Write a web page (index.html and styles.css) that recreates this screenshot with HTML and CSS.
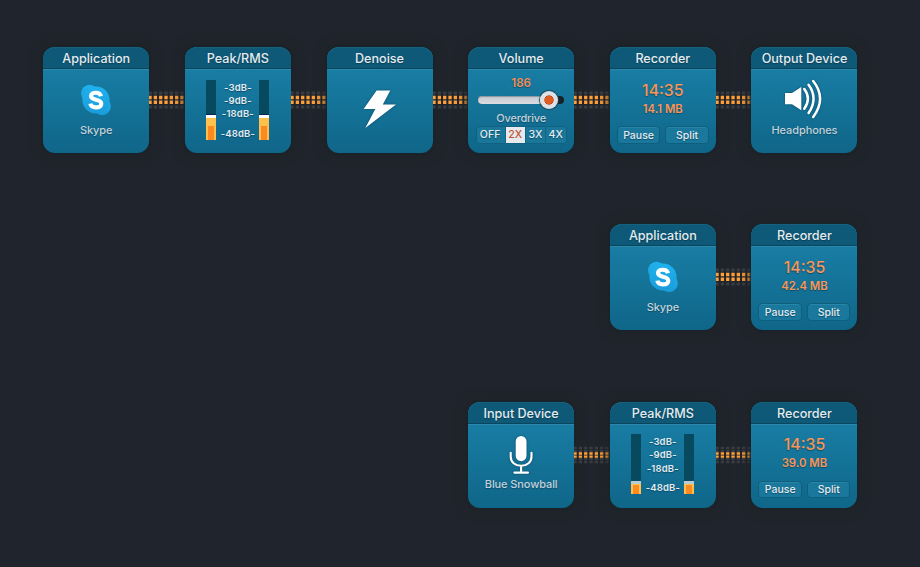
FILE: index.html
```html
<!DOCTYPE html>
<html lang="en">
<head>
<meta charset="utf-8">
<title>Audio session</title>
<link rel="stylesheet" href="styles.css">
</head>
<body>
<svg class="defs" aria-hidden="true">
  <defs>
    <linearGradient id="sky" x1="0" y1="0" x2="0" y2="1"><stop offset="0" stop-color="#1fb2ee"/><stop offset="1" stop-color="#1b9cdb"/></linearGradient>
    <symbol id="skype" viewBox="0 0 32 32">
      <g fill="url(#sky)"><circle cx="9.6" cy="9.3" r="8.6"/><circle cx="22.2" cy="22.4" r="8.6"/><circle cx="16" cy="16" r="13.6"/></g>
      <path d="M21 12.3C20.4 9.6 18.4 8.7 15.9 8.7C13.2 8.7 11 9.9 11 12.1C11 14.4 13 15.1 15.9 15.7C18.9 16.3 21.3 17.1 21.3 19.7C21.3 22.2 18.9 23.4 15.8 23.4C13 23.4 10.8 22.2 10.3 19.6" fill="none" stroke="#fff" stroke-width="4.1"/>
    </symbol>
    <symbol id="wire" viewBox="0 0 36 18">
      <g class="idle"><path d="M0 2h36M0 16h36"/></g>
      <g class="live"><path d="M0 6.5h36M0 11.2h36"/></g>
    </symbol>
    <symbol id="wire-low" viewBox="0 0 36 18">
      <g class="idle low"><path d="M0 1.8h36M0 4.8h36M0 13.2h36M0 16.2h36"/></g>
      <g class="live low"><path d="M0 7.5h36M0 10.6h36"/></g>
    </symbol>
  </defs>
</svg>
<main class="canvas">
  <section class="node c1 r1"><h2>Application</h2><div class="body"><svg class="skype"><use href="#skype"/></svg><p class="name">Skype</p></div><svg class="wire"><use href="#wire"/></svg></section>
  <section class="node c2 r1"><h2>Peak/RMS</h2><div class="body meters"><i class="meter high"></i><div class="scale"><span>-3dB-</span><span>-9dB-</span><span>-18dB-</span><span>-48dB-</span></div><i class="meter high"></i></div><svg class="wire"><use href="#wire"/></svg></section>
  <section class="node c3 r1"><h2>Denoise</h2><div class="body"><svg class="bolt" viewBox="0 0 34 40"><path d="M13.6 1.6H27.3L19.8 15.6H33L2.3 39L12.3 20.1H.6Z"/></svg></div><svg class="wire"><use href="#wire"/></svg></section>
  <section class="node c4 r1"><h2>Volume</h2><div class="body volume"><p class="level">186</p><div class="slider"><i class="fill"></i><i class="knob"></i></div><p class="name">Overdrive</p><div class="segments"><span>OFF</span><span class="on">2X</span><span>3X</span><span>4X</span></div></div><svg class="wire"><use href="#wire"/></svg></section>
  <section class="node c5 r1"><h2>Recorder</h2><div class="body recorder"><p class="time">14:35</p><p class="size">14.1 MB</p><div class="actions"><button>Pause</button><button>Split</button></div></div><svg class="wire"><use href="#wire"/></svg></section>
  <section class="node c6 r1"><h2>Output Device</h2><div class="body"><svg class="speaker" viewBox="0 0 40 40"><path class="solid" d="M1 14H8L17.3 8V31.2L8 25.3H1Z"/><path class="waves" d="M20.3 10Q27.5 19.5 20.3 29.8M24.6 5.8Q34.5 19.5 24.6 34M29.2 2Q43 19.5 29.2 38"/></svg><p class="name">Headphones</p></div></section>

  <section class="node c5 r2"><h2>Application</h2><div class="body"><svg class="skype"><use href="#skype"/></svg><p class="name">Skype</p></div><svg class="wire"><use href="#wire"/></svg></section>
  <section class="node c6 r2"><h2>Recorder</h2><div class="body recorder"><p class="time">14:35</p><p class="size">42.4 MB</p><div class="actions"><button>Pause</button><button>Split</button></div></div></section>

  <section class="node c4 r3"><h2>Input Device</h2><div class="body"><svg class="mic" viewBox="0 0 24 40"><rect class="solid" x="6.7" y="1" width="10.8" height="25.2" rx="5.4"/><path class="waves" d="M1.7 17.7V21.5C1.7 27 6 30.8 12.1 30.8S22.5 27 22.5 21.5V17.7M12.1 30.8V37.6M5.4 37.6H19"/></svg><p class="name">Blue Snowball</p></div><svg class="wire"><use href="#wire-low"/></svg></section>
  <section class="node c5 r3"><h2>Peak/RMS</h2><div class="body meters"><i class="meter quiet"></i><div class="scale"><span>-3dB-</span><span>-9dB-</span><span>-18dB-</span><span>-48dB-</span></div><i class="meter quiet"></i></div><svg class="wire"><use href="#wire-low"/></svg></section>
  <section class="node c6 r3"><h2>Recorder</h2><div class="body recorder"><p class="time">14:35</p><p class="size">39.0 MB</p><div class="actions"><button>Pause</button><button>Split</button></div></div></section>
</main>
</body>
</html>
```
FILE: styles.css
```css
*, *::before, *::after { box-sizing: border-box; }
body { margin: 0; background: #20242c; font-family: Inter, "Liberation Sans", sans-serif; color: #e4ebf0; }
h2, p { margin: 0; font-weight: 500; }
.defs { position: absolute; width: 0; height: 0; }
.canvas { width: 920px; height: 567px; padding: 47.4px 0 0 43.2px; display: grid; grid-template-columns: repeat(6, 106px); grid-template-rows: repeat(3, 106px); column-gap: 35.66px; row-gap: 71.1px; overflow: hidden; }
.c1 { grid-column: 1; } .c2 { grid-column: 2; } .c3 { grid-column: 3; } .c4 { grid-column: 4; } .c5 { grid-column: 5; } .c6 { grid-column: 6; }
.r1 { grid-row: 1; } .r2 { grid-row: 2; } .r3 { grid-row: 3; }
.node { position: relative; border-radius: 12px; background: linear-gradient(#197da4 20%, #0f6689); box-shadow: 0 0 2px 1px #15252c, 0 0 10px 4px #20242580; }
.node h2 { height: 22px; border-radius: 12px 12px 0 0; background: #0e5977; border-bottom: 1px solid #084660; box-shadow: 0 1px #2d87ab, inset 0 1px #17617e; font-size: 12.6px; line-height: 23px; text-align: center; letter-spacing: -.02px; white-space: nowrap; text-shadow: 0 1px 1px #083e55; }
.body { height: 84px; display: flex; flex-direction: column; align-items: center; text-shadow: 0 1px 1px #0b4e69; }
.name { font-size: 11px; line-height: 14px; letter-spacing: -.1px; color: #c3d1da; white-space: nowrap; }
.skype { width: 32px; height: 32px; margin: 14.6px 0 6.6px; }
.solid, .bolt path { fill: #fff; }
.waves { fill: none; stroke: #fff; stroke-width: 2.1; stroke-linecap: round; }
.speaker .waves { stroke-width: 2.5; }
.bolt { width: 34px; height: 40px; margin-top: 20px; filter: drop-shadow(0 0 1px #0c4963); }
.speaker { width: 40px; height: 40px; margin: 10px 0 3.2px; filter: drop-shadow(0 0 1px #0c4963); }
.mic { width: 24px; height: 40px; margin: 11px 0 2.5px; filter: drop-shadow(0 0 1px #0c4963); }

.wire { position: absolute; left: 106px; top: 44px; width: 36px; height: 18px; }
.live, .idle { fill: none; stroke-dasharray: 3.3 2.03; stroke-dashoffset: .6; }
.live { stroke: #ff9f38; stroke-width: 3.5px; }
.idle { stroke: #393d41; stroke-width: 3.1px; }
.low { stroke-width: 2.3px; }

.meters { flex-direction: row; align-items: flex-start; justify-content: center; padding-top: 10.6px; }
.meter { width: 10px; height: 60px; background: #07495f; display: flex; flex-direction: column; justify-content: flex-end; }
.meter::after { content: ""; width: 10px; border: solid #ffc14c; border-width: 8px 2px 0; background: #fb8a20; }
.high::after { height: 22px; }
.high::before { content: ""; height: 4px; background: #fff; border-top: 1px solid #06235a; }
.quiet::before { content: ""; height: 3px; background: #b9cbd2; }
.quiet::after { height: 10px; border-width: 1px 2px 0; }
.scale { width: 43px; height: 60px; padding-top: 1px; font-size: 9.5px; line-height: 13.2px; letter-spacing: .15px; font-weight: 600; text-align: center; display: flex; flex-direction: column; white-space: nowrap; }
.scale span:last-child { margin-top: 6.6px; }

.level { margin-top: 7px; font-size: 11.5px; line-height: 14px; font-weight: 600; color: #ef8e59; }
.slider { position: relative; width: 86px; height: 8px; margin-top: 5.7px; border-radius: 4px; background: #18222a; }
.fill { display: block; width: 72px; height: 8px; border-radius: 4px; background: linear-gradient(#c5c9cf, #dadce0); box-shadow: inset 0 1px 1px #8995a0; }
.knob { position: absolute; left: 62px; top: -5px; width: 18px; height: 18px; border-radius: 50%; background: radial-gradient(circle, #e55a1e 0 3.8px, #a74929 4.3px, #dfe0e3 5px 100%); box-shadow: 0 0 1px 1px #11495f; }
.volume .name { margin-top: 6.8px; letter-spacing: -.2px; }
.segments { display: grid; grid-template-columns: 28px 20px 20.5px 20px; width: 91px; height: 18px; margin-top: 1.4px; border: 1px solid #0f6283; border-radius: 4px; background: #1a7799; }
.segments span { font-size: 10.6px; line-height: 16px; font-weight: 500; text-align: center; border-left: 1px solid #0e6687; }
.segments span:first-child { border: 0; padding-right: 1px; }
.segments .on { background: #e8e9ec; color: #bd583c; text-shadow: none; }

.recorder { color: #fa9557; }
.time { margin-top: 12.4px; font-size: 15.8px; line-height: 18px; }
.size { margin-top: 1.8px; font-size: 11.3px; line-height: 15px; font-weight: 600; }
.actions { display: flex; gap: 5px; margin-top: 9.8px; }
.actions button { width: 43.5px; height: 17.5px; padding: 0; border: 1px solid #0d5f80; border-radius: 4px; background: #1a789c; box-shadow: inset 0 1px #2785a8; font: 500 10.5px/15px Inter, sans-serif; color: #e4ebf0; text-shadow: 0 1px 1px #0b4e69; }
```
